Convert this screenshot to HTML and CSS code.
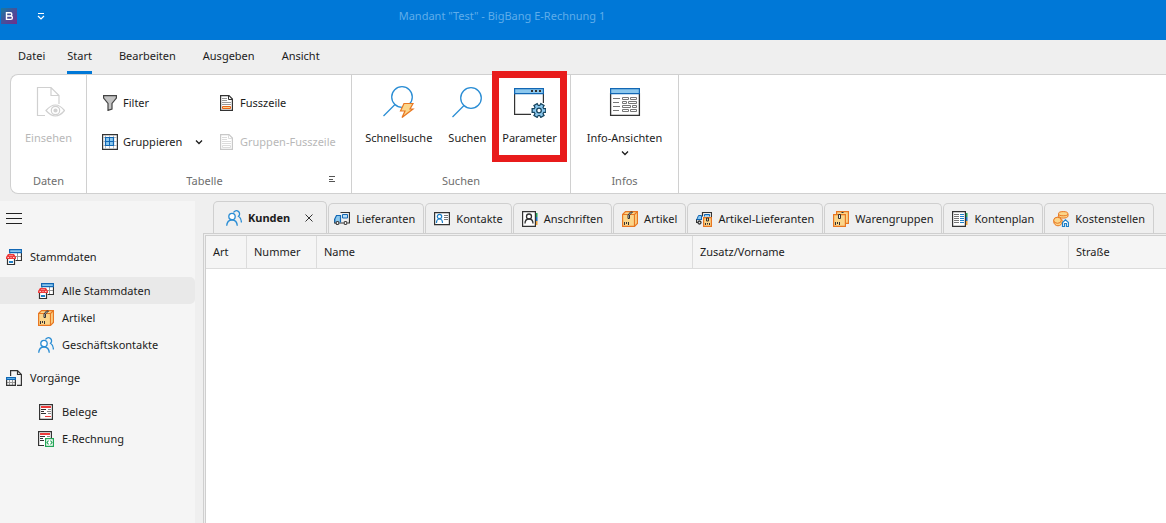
FILE: index.html
```html
<!DOCTYPE html>
<html lang="de">
<head>
<meta charset="utf-8">
<title>Mandant "Test" - BigBang E-Rechnung 1</title>
<link rel="stylesheet" href="styles.css">
</head>
<body>
<svg class="sprite" aria-hidden="true">
  <defs>
    <linearGradient id="logo-fill" x1="0" y1="0" x2="1" y2="1"><stop offset="0" stop-color="#167ba0"/><stop offset=".5" stop-color="#46509a"/><stop offset="1" stop-color="#702f8a"/></linearGradient>
  </defs>
  <symbol id="i-people" viewBox="0 0 16 16" fill="none" stroke="#2a8dd4" stroke-width="1.3">
    <path d="M7.500 2.500A3.200 3.200 0 1 1 12.500 6.300Q15.300 8 15.400 12.500"/>
    <circle cx="6" cy="6.500" r="3.200" fill="#fff"/>
    <path d="M.7 15.800C1 11.800 3 10 6 10s5 1.800 5.300 5.800"/>
  </symbol>
  <symbol id="i-truck" viewBox="0 0 16 16" fill="none">
    <path d="M6.500 1.500h9v10.500h-2M.5 8v4h2M5.500 12h4" stroke="#333" stroke-width="1.200"/>
    <path d="M6.500 11.500V4.500H2.500L.8 8v3.500" fill="#8cc8ee" stroke="#1267b4" stroke-width="1.200"/>
    <path d="M8.500 3.500h5v3.500h-5z" fill="#b9def5" stroke="#1267b4"/>
    <circle cx="3.500" cy="12" r="1.500" fill="#fff" stroke="#333" stroke-width="1.200"/><circle cx="11.500" cy="12" r="1.500" fill="#fff" stroke="#333" stroke-width="1.200"/>
  </symbol>
  <symbol id="i-contact" viewBox="0 0 16 16" fill="none">
    <path d="M.6 1.600h14.800v12H.6z" fill="#fff" stroke="#333" stroke-width="1.200"/>
    <path d="M10 4.500h4M10 6.500h4M10 8.500h4" stroke="#777"/>
    <circle cx="5.500" cy="5.500" r="2.200" stroke="#1d80c8" stroke-width="1.200"/><path d="M2.500 12c0-2.600 1-4 3-4s3 1.400 3 4" stroke="#1d80c8" stroke-width="1.200"/>
  </symbol>
  <symbol id="i-address" viewBox="0 0 16 16" fill="none">
    <path d="M13 2h2.500v4H13z" fill="#20a35a"/><path d="M13 6h2.500v4H13z" fill="#1973c1"/><path d="M13 10h2.500v4H13z" fill="#eda13b"/>
    <path d="M.6.600h12.800v14.800H.6z" fill="#fff" stroke="#333" stroke-width="1.200"/>
    <circle cx="7" cy="5.500" r="2.500" stroke="#333" stroke-width="1.300"/><path d="M3 12.500c0-3 1.400-4.500 4-4.500s4 1.500 4 4.500" stroke="#333" stroke-width="1.300"/>
  </symbol>
  <symbol id="i-box" viewBox="0 0 16 16">
    <path d="M.6 3.500 3.500.600h11.900v11.900l-2.900 2.900H.6z" fill="#fbd58a" stroke="#e87722" stroke-width="1.200"/>
    <path d="M.6 3.500h11.900v11.900M12.500 3.500l2.900-2.900" fill="none" stroke="#e87722" stroke-width="1.200"/>
    <path d="M6 7.500V4L8.500 1h2L7.500 4v3.500z" fill="#ddd" stroke="#333"/>
    <path d="M2.500 11v3M4.500 11v2M6.500 11v3" stroke="#333"/>
  </symbol>
  <symbol id="i-boxtruck" viewBox="0 0 16 16" fill="none">
    <path d="M6.500 5.500v-4h9v5M.5 8v3.500h1.500" stroke="#333" stroke-width="1.200"/>
    <path d="M5.500 9V4.500h-3L.8 8.500h4.700M8.500 5.500v-2h5v2" fill="#8cc8ee" stroke="#1267b4"/>
    <circle cx="3.500" cy="11.500" r="1.500" stroke="#333" stroke-width="1.300"/>
    <path d="M7.600 6.600h7.800v8.800H7.600z" fill="#fbd58a" stroke="#e87722" stroke-width="1.200"/>
    <path d="M10.500 7h2v3h-2zM9.500 12v2M11.500 12v1.500M13.500 12v2" stroke="#333"/>
  </symbol>
  <symbol id="i-boxes" viewBox="0 0 16 16">
    <path d="M3.600.600h11.800v11.800H3.600z" fill="#fbd58a" stroke="#e87722" stroke-width="1.200"/>
    <path d="M.6 3.600h11.800v11.800H.6z" fill="#fbd58a" stroke="#e87722" stroke-width="1.200"/>
    <path d="M5.500 3.500h2v4h-2zM8.500 1.500h2" fill="#eee" stroke="#333"/>
    <path d="M2.500 11v3M4.500 11v2M6.500 11v3" stroke="#333"/>
  </symbol>
  <symbol id="i-book" viewBox="0 0 16 16">
    <path d="M13 2h2.500v4H13z" fill="#20a35a"/><path d="M13 6h2.500v4H13z" fill="#1973c1"/><path d="M13 10h2.500v4H13z" fill="#eda13b"/>
    <path d="M.6.600h12.800v14.800H.6z" fill="#fff" stroke="#333" stroke-width="1.200"/>
    <path d="M2 3.500h5M2 5.500h5M2 7.500h5M2 9.500h5M2 11.500h5" stroke="#777"/><path d="M8 3.500h4M8 5.500h4M8 7.500h4M8 9.500h4M8 11.500h4" stroke="#1d80c8"/>
  </symbol>
  <symbol id="i-coins" viewBox="0 0 16 16">
    <g fill="#fbd58a" stroke="#e87722"><path d="M5.500 3v2c0 2.800 9.500 2.800 9.500 0V3"/><ellipse cx="10.200" cy="2.700" rx="4.700" ry="2.100"/><circle cx="5" cy="10.500" r="4.300"/><ellipse cx="4.500" cy="9.300" rx="3.800" ry="3"/></g>
    <path d="M9.500 15.500v-4l3-2.800 3 2.800v4h-2v-3h-2v3z" fill="#fff" stroke="#1d80c8" stroke-width="1.200"/>
  </symbol>
  <symbol id="i-master" viewBox="0 0 16 16">
    <path d="M4 3.500v8h11.500v-8M4 7.500h11M11.500 4v7" fill="#fff" stroke="#999"/><path d="M15.500 3v8.500H10" fill="none" stroke="#333" stroke-width="1.200"/>
    <path d="M3.600.600h11.800v3H3.600z" fill="#8cc8ee" stroke="#1267b4" stroke-width="1.200"/>
    <path d="M1.500 9.500h7v6h-7z" fill="#fff" stroke="#333" stroke-width="1.200"/><path d="M3 12h4v2H3z" fill="#1d80c8"/>
    <path d="M2 5h6l2 3v2H0V8z" fill="#ee3b3b"/><path d="M1.500 8.500H3M3.500 6.500H4.500M5.500 6.500h1M4.500 8.500h1M7 8.500h1.500" stroke="#fcc"/>
  </symbol>
  <symbol id="i-docs" viewBox="0 0 16 16" fill="none">
    <path d="M4.600 6V.600h6.900l3.900 4v10.800H11M11.500 1v3.500H15" stroke="#333" stroke-width="1.200"/>
    <path d="M3.500 10v5M6.500 10v5M1 12.500h8" stroke="#999"/><path d="M.6 10v5.400h8.800V10" stroke="#333" stroke-width="1.200"/><path d="M.6 7.500h8.800v2H.6z" fill="#5fb1e8" stroke="#1267b4" stroke-width="1.200"/>
  </symbol>
  <symbol id="i-receipt" viewBox="0 0 16 16">
    <path d="M1.600.600h12.800v14.800H1.600z" fill="#fff" stroke="#333" stroke-width="1.200"/>
    <path d="M3 2h10v2H3z" fill="#ee3b3b"/><path d="M7 12.500h6" stroke="#ee3b3b"/>
    <path d="M3 5.500h5M3 7.500h3M3 9.500h5" stroke="#333"/><path d="M10 5.500h3M9 7.500h4M10 9.500h3" stroke="#888"/>
  </symbol>
  <symbol id="i-erech" viewBox="0 0 16 16">
    <path d="M6 14.500H.6V.600h12.800V7" fill="#fff" stroke="#333" stroke-width="1.200"/>
    <path d="M2 2h10v2H2z" fill="#ee3b3b"/><path d="M2 5.500h5M2 7.500h3M2 9.500h4" stroke="#333"/><path d="M9 5.500h3" stroke="#888"/>
    <path d="M7.600 7.600h7.800v7.800H7.600z" fill="#fff" stroke="#22a556" stroke-width="1.200"/><path d="M10.500 9.500 9 11.500l1.500 2M12.500 9.500l1.500 2-1.500 2" fill="none" stroke="#22a556" stroke-width="1.200"/>
  </symbol>
  <symbol id="i-page" viewBox="0 0 16 16">
    <path d="M1.600.600h8.400l3.400 3.400v11.400H1.600z" fill="#fff" stroke="#333" stroke-width="1.200"/><path d="M9.500 1v3.500H13" fill="none" stroke="#333"/>
    <path d="M3 3.500h5M3 5.500h5M3 7.500h9M3 9.500h9" stroke="#999"/><path d="M3.500 11.500h8v2h-8z" fill="#fbd58a" stroke="#e8651a"/>
  </symbol>
  <symbol id="i-page-off" viewBox="0 0 16 16">
    <path d="M1.600.600h8.400l3.400 3.400v11.400H1.600z" fill="#fff" stroke="#c8c8c8" stroke-width="1.200"/><path d="M9.500 1v3.500H13M3 3.500h5M3 5.500h5M3 7.500h9M3 9.500h9M3.500 11.500h8v2h-8z" fill="none" stroke="#dcdcdc"/>
  </symbol>
  <symbol id="i-filter" viewBox="0 0 16 16"><path d="M1.600.600h12.800V3L10 8.500v5.500l-4 1.400V8.500L1.600 3z" fill="#c4c4c4" stroke="#444" stroke-width="1.200"/></symbol>
  <symbol id="i-grid" viewBox="0 0 16 16"><path d="M.6.600h14.800v14.800H.6z" fill="#fff" stroke="#333" stroke-width="1.200"/><path d="M3.500 1v14M7.500 1v14M11.500 1v14M1 3.500h14M1 7.500h14M1 11.500h14" stroke="#bbb"/><path d="M3.500 3.500h8v8h-8z" fill="#8cc8ee" stroke="#1267b4" stroke-width="1.200"/><path d="M7.500 4v8M4 7.500h8" stroke="#1267b4"/></symbol>
  <symbol id="i-chev" viewBox="0 0 8 8"><path d="m1 2.500 3 3 3-3" fill="none" stroke="currentColor" stroke-width="1.300"/></symbol>
</svg>

<header class="titlebar">
  <svg class="ico" viewBox="0 0 16 16" role="img" aria-label="BigBang"><path d="M0 0h16v16H0z" fill="url(#logo-fill)"/><path d="M5.500 4.700h3.700a1.600 1.600 0 0 1 0 3.300H5.500h4.200a1.700 1.700 0 0 1 0 3.400H5.500z" fill="none" stroke="#fff" stroke-width="1.400"/></svg>
  <button class="quick" aria-label="Schnellzugriff anpassen"><svg class="chev" viewBox="0 0 8 8"><path d="M1 1.500h6M1 4l3 3 3-3" fill="none" stroke="#fff" stroke-width="1.200"/></svg></button>
  <h1 class="title">Mandant "Test" - BigBang E-Rechnung 1</h1>
</header>

<nav class="menu">
  <button class="menu-item menu-item--file">Datei</button>
  <button class="menu-item menu-item--on">Start</button>
  <button class="menu-item">Bearbeiten</button>
  <button class="menu-item">Ausgeben</button>
  <button class="menu-item">Ansicht</button>
</nav>

<div class="ribbon">
  <section class="group group--data">
    <div class="tools">
      <button class="big" disabled>
        <svg class="ico-big" viewBox="0 0 32 32" fill="none" stroke="#d0d0d0" stroke-width="1.200"><path d="M12 29.500H4.500v-28H18l8 8V18M18 1.500v8h8"/><path d="M13 24.500q9.500-11 18.500 0-9 11-18.500 0z" fill="#fff"/><circle cx="22.500" cy="24.500" r="4.200"/><circle cx="22.500" cy="24.500" r="1.500" fill="#d0d0d0"/></svg>
        Einsehen
      </button>
    </div>
    <h2 class="caption">Daten</h2>
  </section>
  <section class="group group--table">
    <div class="grid">
      <button class="small"><svg class="ico"><use href="#i-filter"/></svg>Filter</button>
      <button class="small"><svg class="ico"><use href="#i-page"/></svg>Fusszeile</button>
      <button class="small"><svg class="ico"><use href="#i-grid"/></svg>Gruppieren<svg class="chev chev--row"><use href="#i-chev"/></svg></button>
      <button class="small" disabled><svg class="ico"><use href="#i-page-off"/></svg>Gruppen-Fusszeile</button>
    </div>
    <div class="foot"><h2 class="caption">Tabelle</h2><button class="launcher" aria-label="Weitere Optionen"><svg class="chev" viewBox="0 0 8 8"><path d="M1 1.500h6M1 4.500h4M1 6.500h6" stroke="#555"/></svg></button></div>
  </section>
  <section class="group group--search">
    <div class="tools">
      <button class="big"><svg class="ico-big" viewBox="0 0 32 32"><circle cx="19" cy="11" r="10.300" fill="none" stroke="#2a8dd4" stroke-width="1.300"/><path d="M12 18.500.5 30" stroke="#2a8dd4" stroke-width="1.300"/><path d="M21 17.500h9L27 23h3L19 31.500l3-6.500h-4.500z" fill="#fbd58a" stroke="#e87722" stroke-width="1.200"/></svg>Schnellsuche</button>
      <button class="big"><svg class="ico-big" viewBox="0 0 32 32" fill="none" stroke="#2a8dd4" stroke-width="1.300"><circle cx="20" cy="12" r="10.300"/><path d="M13 19.500 1.500 31"/></svg>Suchen</button>
      <button class="big"><svg class="ico-big" viewBox="0 0 32 32"><path d="M.6 7v21.400H17M29.400 7v10" fill="none" stroke="#333" stroke-width="1.200"/><path d="M.6 2.600h28.800v5H.6z" fill="#8cc8ee" stroke="#1267b4" stroke-width="1.200"/><path d="M17 4h2v2h-2zM21 4h2v2h-2zM25 4h2v2h-2z" fill="#333"/><g stroke="#17455f" stroke-width="5"><path d="M17.500 24.500h15M21.250 18l7.500 13M28.750 18l-7.500 13"/><circle cx="25" cy="24.500" r="3"/></g><g stroke="#8cc8ee" stroke-width="2.600"><path d="M18.800 24.500h12.400M21.900 19.100l6.200 10.800M28.100 19.100l-6.200 10.800"/><circle cx="25" cy="24.500" r="3.200" fill="#8cc8ee"/></g><circle cx="25" cy="24.500" r="2.300" fill="#fff" stroke="#17455f" stroke-width="1.300"/></svg>Parameter<span class="marker"></span></button>
    </div>
    <h2 class="caption">Suchen</h2>
  </section>
  <section class="group group--info">
    <div class="tools">
      <button class="big"><svg class="ico-big" viewBox="0 0 32 32"><path d="M1.600 7v22.400h28.800V7" fill="#fff" stroke="#333" stroke-width="1.300"/><path d="M1.600 2.600h28.800v5H1.600z" fill="#8cc8ee" stroke="#1267b4" stroke-width="1.200"/><path d="M4 12.500h7M4 16.500h6M4 20.500h7M4 24.500h6M13.500 11.500h6v2h-6zM21.500 11.500h6v2h-6zM13.500 15.500h4v2h-4zM19.500 15.500h8v2h-8zM13.500 19.500h8v2h-8zM23.500 19.500h4v2h-4zM13.500 23.500h6v2h-6zM21.500 23.500h6v2h-6z" fill="none" stroke="#777"/></svg>Info-Ansichten<svg class="chev chev--below"><use href="#i-chev"/></svg></button>
    </div>
    <h2 class="caption">Infos</h2>
  </section>
</div>

<div class="work">
  <nav class="side">
    <button class="burger" aria-label="Navigation"><svg class="ico" viewBox="0 0 16 16"><path d="M0 2.500h16M0 7.500h16M0 12.500h16" stroke="#222"/></svg></button>
    <a class="head" href="#"><svg class="ico"><use href="#i-master"/></svg>Stammdaten</a>
    <a class="item item--on" href="#"><svg class="ico"><use href="#i-master"/></svg>Alle Stammdaten</a>
    <a class="item" href="#"><svg class="ico"><use href="#i-box"/></svg>Artikel</a>
    <a class="item" href="#"><svg class="ico"><use href="#i-people"/></svg>Geschäftskontakte</a>
    <a class="head" href="#"><svg class="ico"><use href="#i-docs"/></svg>Vorgänge</a>
    <a class="item" href="#"><svg class="ico"><use href="#i-receipt"/></svg>Belege</a>
    <a class="item" href="#"><svg class="ico"><use href="#i-erech"/></svg>E-Rechnung</a>
  </nav>
  <main class="main">
    <div class="tabs">
      <div class="tab tab--on"><svg class="ico"><use href="#i-people"/></svg>Kunden<button class="close" aria-label="Schließen"><svg class="chev" viewBox="0 0 8 8"><path d="m.5.500 7 7m0-7-7 7" stroke="#333"/></svg></button></div>
      <button class="tab"><svg class="ico"><use href="#i-truck"/></svg>Lieferanten</button>
      <button class="tab"><svg class="ico"><use href="#i-contact"/></svg>Kontakte</button>
      <button class="tab"><svg class="ico"><use href="#i-address"/></svg>Anschriften</button>
      <button class="tab"><svg class="ico"><use href="#i-box"/></svg>Artikel</button>
      <button class="tab"><svg class="ico"><use href="#i-boxtruck"/></svg>Artikel-Lieferanten</button>
      <button class="tab"><svg class="ico"><use href="#i-boxes"/></svg>Warengruppen</button>
      <button class="tab"><svg class="ico"><use href="#i-book"/></svg>Kontenplan</button>
      <button class="tab"><svg class="ico"><use href="#i-coins"/></svg>Kostenstellen</button>
    </div>
    <div class="panel">
      <div class="sheet">
        <table class="table">
          <colgroup><col class="c-art"><col class="c-num"><col class="c-wide"><col class="c-wide"><col></colgroup>
          <thead><tr><th>Art</th><th>Nummer</th><th>Name</th><th>Zusatz/Vorname</th><th>Straße</th></tr></thead>
        </table>
      </div>
    </div>
  </main>
</div>
</body>
</html>
```
FILE: styles.css
```css
* { box-sizing: border-box; }
html, body { height: 100%; }
body {
  margin: 0;
  display: flex;
  flex-direction: column;
  overflow: hidden;
  background: #efefef;
  color: #1c1c1c;
  font: 11px/16px "Noto Sans", "Open Sans", sans-serif;
}
button { margin: 0; padding: 0; border: 0; background: none; color: inherit; font: inherit; white-space: nowrap; }
button:disabled { color: #b8b8b8; }
a { color: inherit; text-decoration: none; }
h1, h2 { margin: 0; font: inherit; }
svg { display: block; flex: none; }
.sprite { position: absolute; width: 0; height: 0; }
.ico { width: 16px; height: 16px; }
.ico-big { width: 32px; height: 32px; }
.chev { width: 8px; height: 8px; }

.titlebar { display: flex; flex: none; height: 40px; padding: 8px 1px; background: #0078d7; }
.quick { display: flex; align-items: center; height: 16px; padding: 0 20px; }
.title { flex: 1; padding-right: 226px; text-align: center; color: #5fadea; }

.menu { display: flex; flex: none; gap: 27px; height: 34px; padding: 0 18px; }
.menu-item { height: 34px; border-bottom: 3px solid transparent; }
.menu-item--file { margin-right: -5px; }
.menu-item--on { border-image: linear-gradient(#0078d7, #0078d7) 1; }

.ribbon {
  display: flex;
  flex: none;
  height: 120px;
  margin-left: 10px;
  border: 1px solid #d0d0d0;
  border-right: 0;
  border-radius: 8px 0 0 8px;
  background: #fff;
}
.group { display: flex; flex-direction: column; justify-content: space-between; border-right: 1px solid #d0d0d0; padding: 11px 0 4px; }
.group--data { width: 76px; }
.group--table { width: 265px; }
.group--search { width: 219px; }
.group--info { width: 108px; }
.tools { display: flex; justify-content: center; gap: 16px; }
.big { position: relative; display: flex; flex-direction: column; align-items: center; gap: 12px; }
.chev--below { margin-top: -9px; }
.caption { text-align: center; color: #6e6e6e; }
.grid { display: grid; grid-template-columns: 117px 1fr; grid-template-rows: 16px 16px; row-gap: 23px; padding: 9px 0 0 15px; }
.small { display: flex; align-items: center; gap: 5px; text-align: left; }
.chev--row { margin-left: 8px; }
.foot { display: grid; grid-template-columns: 1fr auto; align-items: center; }
.foot .caption { padding-right: 6px; }
.launcher { padding: 0 15px 4px 0; }
.marker { position: absolute; inset: -15px -10px -16px; border: 7px solid #e81b1b; }

.work { display: flex; flex: 1; min-height: 0; padding-top: 7px; }
.side { flex: none; width: 195px; background: #f5f5f5; }
.burger { display: block; padding: 10px 6px 14px; }
.head, .item { display: flex; align-items: center; }
.head { gap: 8px; height: 32px; padding-left: 6px; }
.item { gap: 8px; height: 27px; padding-left: 38px; border-radius: 0 5px 5px 0; }
.head + .item { margin-top: 4px; }
.item + .head { margin-top: 4px; }
.item--on { background: #e9e9e9; }

.main { display: flex; flex: 1; flex-direction: column; min-width: 0; padding-left: 8px; }
.tabs { display: flex; align-items: flex-end; gap: 1px; padding-left: 10px; }
.tab {
  display: flex;
  align-items: center;
  gap: 6px;
  height: 30px;
  padding: 0 8px;
  border: 1px solid #cfcfcf;
  border-bottom: 0;
  border-radius: 5px 5px 0 0;
  white-space: nowrap;
}
.tab--on { height: 33px; margin-bottom: -1px; padding: 0 13px 0 12px; background: #efefef; font-weight: bold; }
.tab--on + .tab { padding-left: 5px; }
.close { margin-left: 9px; }
.panel { flex: 1; padding: 1px 0 0 1px; border: 1px solid #cfcfcf; border-width: 1px 0 0 1px; }
.sheet { height: 100%; border: 1px solid #cfcfcf; border-width: 1px 0 0 1px; background: #fff; }
.table { width: 100%; table-layout: fixed; border-collapse: separate; border-spacing: 0; }
.table th { height: 33px; padding: 0 7px; border-right: 1px solid #dcdcdc; border-bottom: 1px solid #dcdcdc; background: #f5f5f5; text-align: left; font-weight: normal; }
.table th:last-child { border-right: 0; }
.c-art { width: 41px; }
.c-num { width: 70px; }
.c-wide { width: 376px; }
```
